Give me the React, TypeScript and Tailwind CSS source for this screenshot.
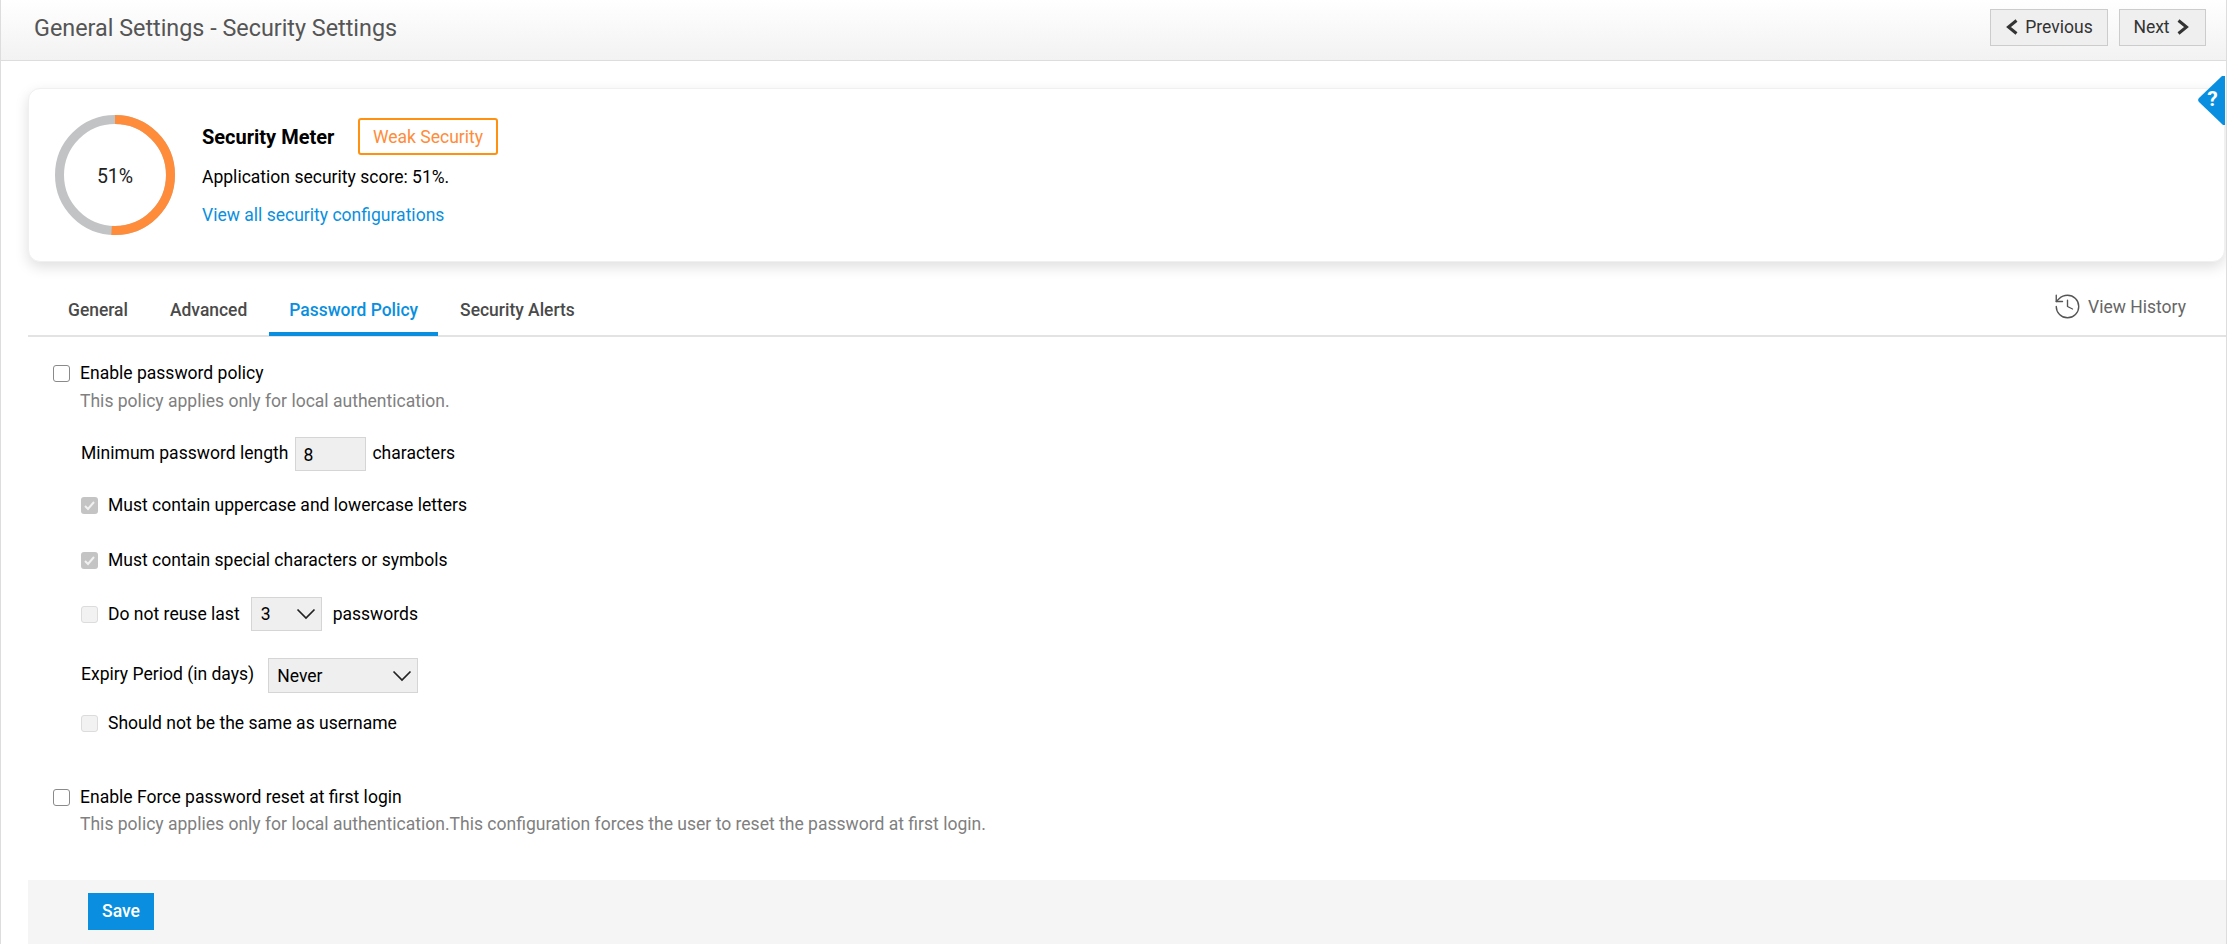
import React from "react";

const Check = ({ state }: { state: "off" | "on" | "disabled" | "none" }) => {
  if (state === "off")
    return <span className="block w-[17px] h-[17px] shrink-0 rounded-[3px] border border-[#8a8a8a] bg-white" />;
  if (state === "disabled")
    return <span className="block w-[17px] h-[17px] shrink-0 rounded-[3px] border border-[#dcdcdc] bg-[#f2f2f2]" />;
  return (
    <span className="flex items-center justify-center w-[17px] h-[17px] shrink-0 rounded-[3px] bg-[#c4c4c4]">
      <svg width="13" height="13" viewBox="0 0 13 13" fill="none" stroke="#f1f1f1" strokeWidth="2">
        <path d="M2 7l3 3 6-7" />
      </svg>
    </span>
  );
};

const Chevron = ({ className }: { className: string }) => (
  <svg className={className} width="20" height="12" viewBox="0 0 20 12" fill="none" stroke="#222" strokeWidth="1.7">
    <path d="M1.5 1.5L10 10l8.5-8.5" />
  </svg>
);

const NavChevron = ({ dir }: { dir: "l" | "r" }) => (
  <svg width="13" height="16" viewBox="0 0 13 16" fill="none" stroke="#333" strokeWidth="3">
    <path d={dir === "l" ? "M11.5 1.5L3.5 8l8 6.5" : "M1.5 1.5L9.5 8l-8 6.5"} />
  </svg>
);

const tabClass = "flex items-center h-[47px] px-[20px] border-b-[4px] border-transparent font-medium text-[#4a4a4a]";

export default function App() {
  return (
    <div className="relative w-[2227px] h-[944px] overflow-hidden bg-white border-x border-[#dddddd] text-[17.55px] text-black font-['Roboto',sans-serif]">
      <header className="flex items-center justify-between h-[61px] border-b border-[#dddddd] bg-gradient-to-b from-white to-[#f2f2f2] pl-[33px] pr-[20px]">
        <h1 className="text-[23.35px] leading-[28px] font-normal text-[#555555] -mt-[5px]">General Settings - Security Settings</h1>
        <div className="flex gap-[11px] -mt-[6px]">
          <button className="flex items-center justify-center gap-[7px] w-[118px] h-[37px] border border-[#cccccc] bg-[#efefef] text-[#333333]">
            <NavChevron dir="l" />
            Previous
          </button>
          <button className="flex items-center justify-center gap-[7px] w-[87px] h-[37px] pr-[2px] border border-[#cccccc] bg-[#efefef] text-[#333333]">
            Next
            <NavChevron dir="r" />
          </button>
        </div>
      </header>

      <section className="relative flex items-center ml-[27px] mr-[1px] mt-[27px] h-[174px] bg-white rounded-[12px] border border-[#f0f0f0] shadow-[0_5px_14px_rgba(0,0,0,0.13)] pl-[26px]">
        <div className="relative w-[120px] h-[120px] shrink-0">
          <svg width="120" height="120" viewBox="0 0 120 120" fill="none">
            <circle cx="60" cy="60" r="55.5" stroke="#c1c3c5" strokeWidth="9" />
            <circle cx="60" cy="60" r="55.5" stroke="#ff8c3a" strokeWidth="9" pathLength="100" strokeDasharray="51 49" transform="rotate(-90 60 60)" />
          </svg>
          <span className="absolute inset-0 flex items-center justify-center pt-[4px] text-[19.5px] text-[#222222]">51%</span>
        </div>
        <div className="ml-[27px] -mt-[5px]">
          <div className="flex items-center h-[37px]">
            <span className="text-[20px] font-bold w-[156px]">Security Meter</span>
            <span className="flex items-center justify-center w-[140px] h-[37px] pt-[1px] border-2 border-[#ff9010] rounded-[3px] text-[#ff8c3a]">Weak Security</span>
          </div>
          <p className="mt-[10px] leading-[24px]">Application security score: 51%.</p>
          <a className="block mt-[14px] leading-[24px] text-[#0a8fe0]">View all security configurations</a>
        </div>
      </section>

      <div className="absolute right-[1px] top-[76px] w-[27px] h-[49px]">
        <svg width="27" height="49" viewBox="0 0 27 49" className="absolute inset-0">
          <path d="M27 0v49h-2L1 26a3 3 0 0 1 0-4L24 0z" fill="#0a8fe0" />
        </svg>
        <span className="absolute inset-0 flex items-center justify-center pl-[2px] pb-[2px] text-[21px] font-bold text-white">?</span>
      </div>

      <nav className="flex items-end justify-between ml-[27px] mt-[25px] h-[50px] border-b-2 border-[#e3e3e3]">
        <div className="flex gap-[2px] pl-[20px] -mb-[1px] text-[17.45px]">
          <span className={tabClass}>General</span>
          <span className={tabClass}>Advanced</span>
          <span className="flex items-center h-[47px] px-[20px] border-b-[4px] border-[#0a8fe0] font-medium text-[#0a8fe0]">Password Policy</span>
          <span className={tabClass}>Security Alerts</span>
        </div>
        <div className="flex items-center gap-[8px] pr-[40px] pb-[15px] text-[#666666]">
          <svg width="25" height="25" viewBox="2 2 20 20" fill="none" stroke="#555555" strokeWidth="1.1" strokeLinecap="round" strokeLinejoin="round">
            <path d="M3 12a9 9 0 1 0 9-9 9.75 9.75 0 0 0-6.74 2.74L3 8" />
            <path d="M3 3v5h5" />
            <path d="M12 7v5l4 2" />
          </svg>
          View History
        </div>
      </nav>

      <main className="pl-[52px] pt-[26px]">
        <label className="flex items-center gap-[10px] h-[20px]">
          <Check state="off" />
          <span>Enable password policy</span>
        </label>
        <p className="ml-[27px] mt-[8px] leading-[20px] text-[#808080]">This policy applies only for local authentication.</p>

        <div className="ml-[28px]">
          <div className="flex items-center h-[34px] mt-[26px]">
            <span className="-mt-[2px]">Minimum password length</span>
            <input readOnly value="8" className="w-[71px] h-[34px] ml-[7px] mr-[6px] pl-[7px] pt-[1px] bg-[#efefef] border border-[#d5d5d5] text-black outline-none" />
            <span className="-mt-[2px]">characters</span>
          </div>
          <label className="flex items-center gap-[10px] h-[20px] mt-[24px]">
            <Check state="on" />
            <span>Must contain uppercase and lowercase letters</span>
          </label>
          <label className="flex items-center gap-[10px] h-[20px] mt-[35px]">
            <Check state="on" />
            <span>Must contain special characters or symbols</span>
          </label>
          <div className="flex items-center h-[34px] mt-[27px]">
            <Check state="disabled" />
            <span className="ml-[10px]">Do not reuse last</span>
            <div className="relative flex items-center w-[71px] h-[34px] ml-[11px] mr-[11px] pl-[9px] bg-[#efefef] border border-[#d5d5d5]">
              3
              <Chevron className="absolute right-[5px] top-[10px]" />
            </div>
            <span>passwords</span>
          </div>
          <div className="flex items-center h-[34px] mt-[27px]">
            <span className="-mt-[2px]">Expiry Period (in days)</span>
            <div className="relative flex items-center w-[150px] h-[35px] ml-[14px] pl-[8px] pt-[2px] bg-[#efefef] border border-[#d5d5d5]">
              Never
              <Chevron className="absolute right-[5px] top-[11px]" />
            </div>
          </div>
          <label className="flex items-center gap-[10px] h-[20px] mt-[21px]">
            <Check state="disabled" />
            <span>Should not be the same as username</span>
          </label>
        </div>

        <label className="flex items-center gap-[10px] h-[20px] mt-[54px]">
          <Check state="off" />
          <span>Enable Force password reset at first login</span>
        </label>
        <p className="ml-[27px] mt-[7px] leading-[20px] text-[#808080]">This policy applies only for local authentication.This configuration forces the user to reset the password at first login.</p>
      </main>

      <footer className="absolute left-[27px] right-0 top-[880px] h-[64px] bg-[#f5f5f5] pl-[60px] pt-[13px]">
        <button className="w-[66px] h-[37px] bg-[#0a8fe0] text-white font-medium">Save</button>
      </footer>
    </div>
  );
}
